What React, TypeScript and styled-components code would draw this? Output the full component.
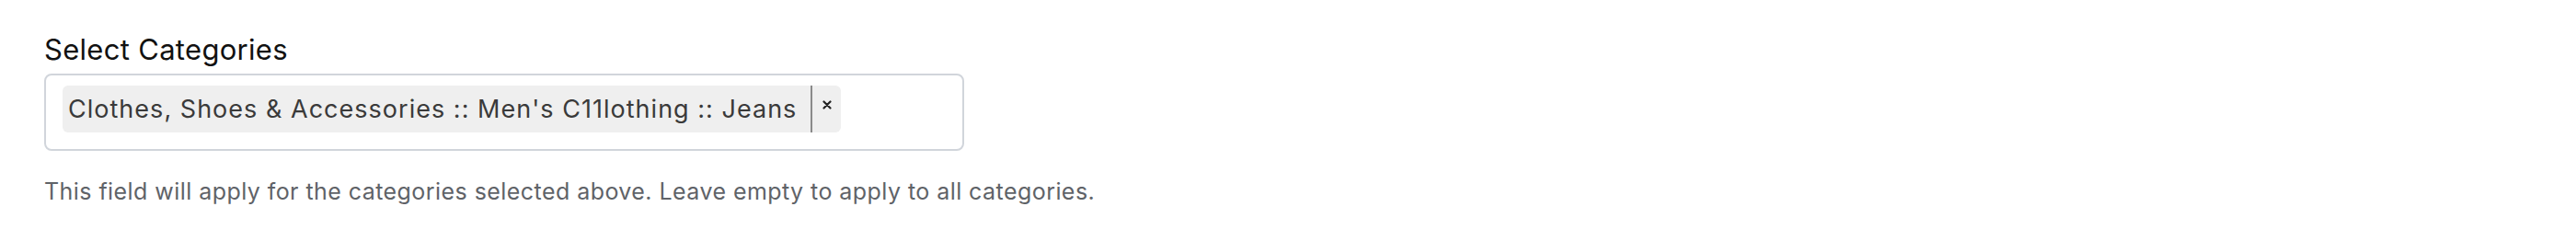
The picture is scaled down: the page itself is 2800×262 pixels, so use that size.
import React from "react";
import styled, { createGlobalStyle } from "styled-components";

const GlobalStyle = createGlobalStyle`
  html, body {
    margin: 0;
    padding: 0;
    background: #ffffff;
  }
  body {
    font-family: Inter, "Open Sans", sans-serif;
  }
`;

const Field = styled.div`
  padding: 34px 48px 0;
  display: flex;
  flex-direction: column;
  align-items: flex-start;
`;

const Label = styled.label`
  font-size: 31px;
  line-height: 40px;
  color: #111111;
  margin-bottom: 6px;
  letter-spacing: 0.3px;
`;

const SelectBox = styled.div`
  box-sizing: border-box;
  width: 1000px;
  height: 84px;
  border: 2px solid #d1d5db;
  border-radius: 8px;
  padding: 11px 18px 18px;
  display: flex;
  align-items: flex-start;
  gap: 8px;
`;

const Chip = styled.div`
  display: flex;
  align-items: stretch;
  height: 51px;
  background: #efefef;
  border-radius: 6px;
  overflow: hidden;
`;

const ChipLabel = styled.span`
  display: flex;
  align-items: center;
  padding: 0 15px 0 6px;
  font-size: 27px;
  color: #3a3a3a;
  letter-spacing: 1.02px;
  white-space: nowrap;
`;

const ChipRemove = styled.button`
  width: 33px;
  border: 0;
  border-left: 2px solid #8a8a8a;
  background: transparent;
  padding: 16px 0 0;
  display: flex;
  justify-content: center;
  align-items: flex-start;
  color: #222222;
  cursor: pointer;
`;

const Help = styled.p`
  margin: 28px 0 0;
  font-size: 25px;
  line-height: 32px;
  color: #5f6368;
  letter-spacing: 0.44px;
`;

const categories = ["Clothes, Shoes & Accessories :: Men's C11lothing :: Jeans"];

export default function App() {
  return (
    <>
      <GlobalStyle />
      <Field>
        <Label>Select Categories</Label>
        <SelectBox>
          {categories.map((c) => (
            <Chip key={c}>
              <ChipLabel>{c}</ChipLabel>
              <ChipRemove aria-label="Remove">
                <svg width="10" height="10" viewBox="0 0 10 10">
                  <path d="M1.5 1.5 L8.5 8.5 M8.5 1.5 L1.5 8.5" stroke="currentColor" strokeWidth="2.2" strokeLinecap="round" />
                </svg>
              </ChipRemove>
            </Chip>
          ))}
        </SelectBox>
        <Help>This field will apply for the categories selected above. Leave empty to apply to all categories.</Help>
      </Field>
    </>
  );
}
